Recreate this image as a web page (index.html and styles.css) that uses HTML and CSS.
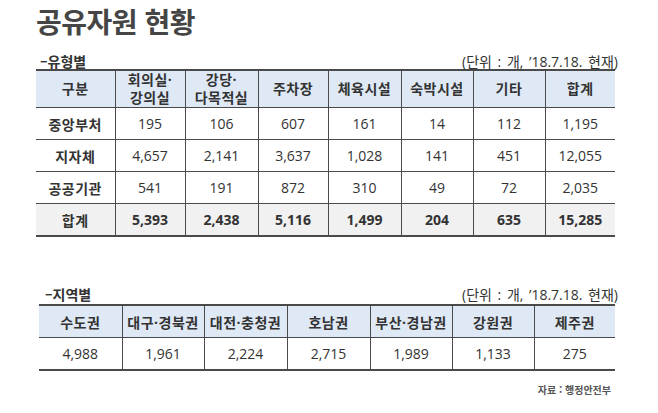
FILE: index.html
```html
<!DOCTYPE html>
<html lang="ko">
<head>
<meta charset="utf-8">
<link rel="stylesheet" href="styles.css">
</head>
<body>
<div class="page">
  <h1 class="title">공유자원 현황</h1>

  <div class="sub sub1">
    <span class="sub-label">–유형별</span>
    <span class="unit">(단위 : 개, ’18.7.18. 현재)</span>
  </div>
  <table class="tbl tbl1">
    <colgroup>
      <col style="width:79px"><col style="width:70px"><col style="width:73px"><col style="width:70px">
      <col style="width:73px"><col style="width:72px"><col style="width:72px"><col style="width:70px">
    </colgroup>
    <thead>
      <tr>
        <th>구분</th>
        <th class="two">회의실·<br>강의실</th>
        <th class="two">강당·<br>다목적실</th>
        <th>주차장</th>
        <th>체육시설</th>
        <th>숙박시설</th>
        <th>기타</th>
        <th>합계</th>
      </tr>
    </thead>
    <tbody>
      <tr><th>중앙부처</th><td>195</td><td>106</td><td>607</td><td>161</td><td>14</td><td>112</td><td>1,195</td></tr>
      <tr><th>지자체</th><td>4,657</td><td>2,141</td><td>3,637</td><td>1,028</td><td>141</td><td>451</td><td>12,055</td></tr>
      <tr><th>공공기관</th><td>541</td><td>191</td><td>872</td><td>310</td><td>49</td><td>72</td><td>2,035</td></tr>
      <tr class="total"><th>합계</th><td>5,393</td><td>2,438</td><td>5,116</td><td>1,499</td><td>204</td><td>635</td><td>15,285</td></tr>
    </tbody>
  </table>

  <div class="sub sub2">
    <span class="sub-label">–지역별</span>
    <span class="unit">(단위 : 개, ’18.7.18. 현재)</span>
  </div>
  <table class="tbl tbl2">
    <colgroup>
      <col style="width:83px"><col style="width:82px"><col style="width:83px"><col style="width:83px">
      <col style="width:82px"><col style="width:82px"><col style="width:81px">
    </colgroup>
    <thead>
      <tr><th>수도권</th><th>대구·경북권</th><th>대전·충청권</th><th>호남권</th><th>부산·경남권</th><th>강원권</th><th>제주권</th></tr>
    </thead>
    <tbody>
      <tr><td>4,988</td><td>1,961</td><td>2,224</td><td>2,715</td><td>1,989</td><td>1,133</td><td>275</td></tr>
    </tbody>
  </table>

  <div class="source">자료 : 행정안전부</div>
</div>
</body>
</html>
```

FILE: styles.css
```css
html, body {
  margin: 0;
  padding: 0;
  background: #fff;
}
body {
  font-family: "Open Sans", "Noto Sans CJK KR", sans-serif;
  color: #333;
}
.page {
  width: 658px;
  height: 413px;
  padding-left: 36px;
  box-sizing: border-box;
  overflow: hidden;
}
.title {
  margin: 0;
  padding-top: 3px;
  font-family: "Noto Sans CJK KR", sans-serif;
  font-size: 28px;
  line-height: 36px;
  font-weight: 700;
  color: #454545;
  letter-spacing: -0.5px;
}
.sub {
  width: 582px;
  display: flex;
  justify-content: space-between;
  align-items: center;
  height: 20px;
}
.sub1 {
  margin-top: 12px;
  margin-bottom: -2px;
  padding-left: 4px;
  box-sizing: border-box;
}
.sub2 {
  margin-top: 47px;
  margin-bottom: 0;
  padding-left: 9px;
  box-sizing: border-box;
}
.sub-label {
  font-family: "Noto Sans CJK KR", sans-serif;
  font-size: 14px;
  font-weight: 700;
  color: #333;
}
.unit {
  font-size: 14px;
  color: #333;
  word-spacing: 2px;
}
.tbl {
  border-collapse: collapse;
  table-layout: fixed;
  font-size: 14px;
  color: #333;
}
.tbl1 { width: 579px; }
.tbl2 { width: 576px; margin-left: 3px; }
.tbl th, .tbl td {
  border: 1px solid #4a4a4a;
  text-align: center;
  padding: 0;
}
.tbl tr > :first-child { border-left: none; }
.tbl tr > :last-child { border-right: none; }
.tbl thead th {
  background: #dfe9f6;
  font-weight: 700;
  border-top: 2px solid #4a4a4a;
  letter-spacing: 0.5px;
}
.tbl1 thead th {
  height: 33px;
  line-height: 18px;
}
.tbl2 thead th {
  height: 31px;
}
.tbl tbody th {
  font-weight: 700;
  letter-spacing: 0.5px;
}
.tbl tbody td, .tbl tbody th {
  height: 31px;
}
.tbl .total th, .tbl .total td {
  background: #f1f1f1;
  font-weight: 700;
  border-bottom: 2px solid #4a4a4a;
}
.tbl2 tbody td {
  border-bottom: 2px solid #4a4a4a;
}
.source {
  width: 575px;
  text-align: right;
  margin-top: 11px;
  font-family: "Noto Sans CJK KR", sans-serif;
  font-size: 10px;
  font-weight: 700;
  color: #555;
}
```
